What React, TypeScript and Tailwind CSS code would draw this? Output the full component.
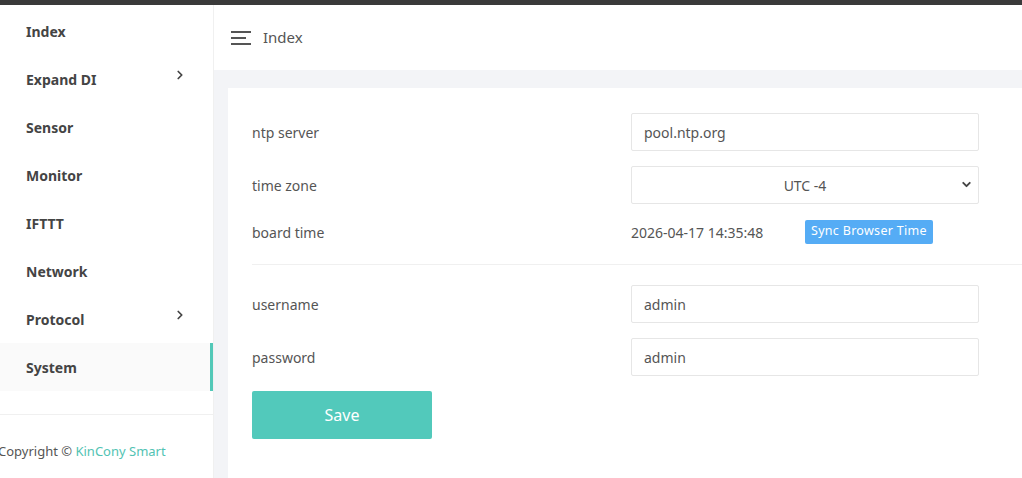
import { ChevronRight, ChevronDown } from 'lucide-react'

const navItems = [
  { label: 'Index' },
  { label: 'Expand DI', sub: true },
  { label: 'Sensor' },
  { label: 'Monitor' },
  { label: 'IFTTT' },
  { label: 'Network' },
  { label: 'Protocol', sub: true },
  { label: 'System', active: true },
]

function Field({ value }: { value: string }) {
  return (
    <input
      readOnly
      value={value}
      className="h-[38px] w-[348px] rounded-[2px] border border-[#e6e6e6] bg-white pl-[12px] text-[14px] text-[#555] outline-none"
    />
  )
}

export default function App() {
  return (
    <div className="flex h-[478px] w-full flex-col overflow-hidden bg-[#f3f4f7] font-['Noto_Sans','Open_Sans',sans-serif] text-[#555]">
      <div className="h-[5px] shrink-0 bg-[#3a3a3a]" />

      <div className="flex min-h-0 flex-1">
        {/* Sidebar */}
        <aside className="flex w-[213px] shrink-0 flex-col bg-white">
          <nav className="pt-[2px]">
            {navItems.map((item) => (
              <div
                key={item.label}
                className={`relative flex h-12 items-center pl-[26px] text-[14px] font-bold text-[#444] ${
                  item.active ? 'bg-[#fafafa]' : ''
                }`}
              >
                {item.label}
                {item.sub && (
                  <ChevronRight
                    className="absolute left-[173px] top-[13px] h-[14px] w-[14px] text-[#444]"
                    strokeWidth={3}
                  />
                )}
                {item.active && (
                  <span className="absolute right-0 top-0 h-full w-[3px] bg-[#52c8b8]" />
                )}
              </div>
            ))}
          </nav>
          <div className="mt-[23px] border-t border-[#f0f0f0]" />
          <div className="ml-[-2px] mt-[27px] whitespace-nowrap text-[13px] text-[#555]">
            Copyright © <span className="text-[#52c3b3]">KinCony Smart</span>
          </div>
        </aside>

        {/* Main */}
        <main className="flex min-w-0 flex-1 flex-col border-l border-[#f0f0f0]">
          <header className="flex h-[65px] shrink-0 items-center bg-white pl-[17px]">
            <svg width="20" height="16" viewBox="0 0 20 16" className="text-[#555]">
              <rect x="0" y="1" width="20" height="2" fill="currentColor" />
              <rect x="0" y="7" width="15" height="2" fill="currentColor" />
              <rect x="0" y="13" width="20" height="2" fill="currentColor" />
            </svg>
            <span className="ml-[12px] text-[15px] text-[#555]">Index</span>
          </header>

          <div className="flex min-h-0 flex-1 pl-[14px] pt-[18px]">
            <section className="flex-1 bg-white pl-[24px] pt-[25px] text-[14px] text-[#555]">
              <div className="grid grid-cols-[379px_348px] gap-y-[15px]">
                <div className="flex h-[38px] items-center">ntp server</div>
                <Field value="pool.ntp.org" />

                <div className="flex h-[38px] items-center">time zone</div>
                <div className="relative h-[38px] w-[348px]">
                  <select
                    defaultValue="-4"
                    className="h-full w-full appearance-none rounded-[2px] border border-[#e6e6e6] bg-white text-[14px] text-[#555] outline-none [text-align-last:center]"
                  >
                    <option value="-4">UTC -4</option>
                  </select>
                  <ChevronDown
                    className="pointer-events-none absolute right-[6px] top-[12px] h-[13px] w-[13px] text-[#444]"
                    strokeWidth={3.5}
                  />
                </div>

                <div className="flex h-[26px] items-center">board time</div>
                <div className="flex h-[26px] items-center">
                  <span className="w-[174px]">2026-04-17 14:35:48</span>
                  <button className="mt-[-1px] h-[24px] rounded-[2px] bg-[#55acf5] px-[6px] text-[12.5px] tracking-[0.3px] text-white">
                    Sync Browser Time
                  </button>
                </div>
              </div>

              <div className="mt-[19px] border-t border-[#f0f0f0]" />

              <div className="mt-[20px] grid grid-cols-[379px_348px] gap-y-[15px]">
                <div className="flex h-[38px] items-center">username</div>
                <Field value="admin" />
                <div className="flex h-[38px] items-center">password</div>
                <Field value="admin" />
              </div>

              <button className="mt-[15px] h-[48px] w-[180px] rounded-[2px] bg-[#52c9bb] text-[16px] text-white">
                Save
              </button>
            </section>
          </div>
        </main>
      </div>
    </div>
  )
}
